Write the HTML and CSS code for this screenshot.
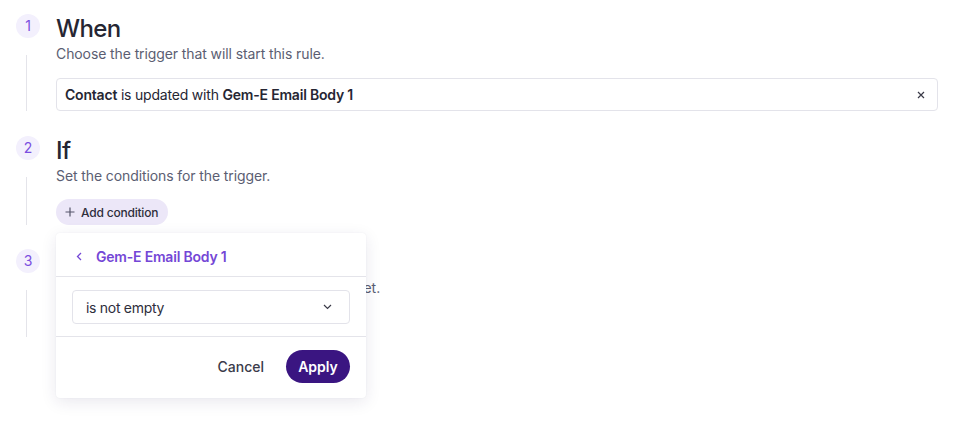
FILE: index.html
```html
<!DOCTYPE html>
<html>
<head>
<meta charset="utf-8">
<link rel="stylesheet" href="styles.css">
</head>
<body>
<div class="page">
  <div class="step">
    <div class="rail"><div class="num">1</div><div class="line"></div></div>
    <div class="content">
      <h2 class="title">When</h2>
      <p class="sub">Choose the trigger that will start this rule.</p>
      <div class="field"><span><b>Contact</b> is updated with <b>Gem-E Email Body 1</b></span>
        <svg class="x" width="8" height="8" viewBox="0 0 8 8"><path d="M1 1L7 7M7 1L1 7" stroke="#3a3a48" stroke-width="1.2" fill="none"/></svg>
      </div>
    </div>
  </div>
  <div class="step">
    <div class="rail"><div class="num">2</div><div class="line"></div></div>
    <div class="content">
      <h2 class="title">If</h2>
      <p class="sub">Set the conditions for the trigger.</p>
      <button class="add"><svg width="10" height="10" viewBox="0 0 10 10"><path d="M5 0.5V9.5M0.5 5H9.5" stroke="#55556a" stroke-width="1.2"/></svg>Add condition</button>
    </div>
  </div>
  <div class="step step-last">
    <div class="rail"><div class="num">3</div><div class="line"></div></div>
    <div class="content">
      <h2 class="title">Then</h2>
      <p class="sub sub-wide">Set the actions that run when conditions are met.</p>
      <div class="spacer"></div>
    </div>
  </div>

  <div class="popover">
    <div class="pop-head">
      <svg width="6" height="9" viewBox="0 0 6 9"><path d="M5 1L1.5 4.5L5 8" stroke="#7447d6" stroke-width="1.3" fill="none"/></svg>
      <span>Gem-E Email Body 1</span>
    </div>
    <div class="pop-body">
      <div class="select"><span>is not empty</span>
        <svg width="9" height="6" viewBox="0 0 9 6"><path d="M1 1L4.5 4.5L8 1" stroke="#3a3a48" stroke-width="1.2" fill="none"/></svg>
      </div>
    </div>
    <div class="pop-foot">
      <button class="cancel">Cancel</button>
      <button class="apply">Apply</button>
    </div>
  </div>
</div>
</body>
</html>
```
FILE: styles.css
```css
* { box-sizing: border-box; }
html, body { margin: 0; background: #fff; }
body { font-family: Inter, "Noto Sans", sans-serif; color: #262633; }
.page { position: relative; padding: 14px 26px 0 16px; width: 964px; height: 436px; }
.step { display: flex; margin-bottom: 25px; }
.step-last { margin-top: -1px; }
.rail { width: 40px; flex: none; display: flex; flex-direction: column; }
.num { width: 24px; height: 24px; border-radius: 50%; background: #f3f0fd; color: #7b4ee0; font-size: 14px; line-height: 24px; text-align: center; }
.line { width: 1px; background: #e4e4ea; margin: 17px 0 0 10px; flex: 1; }
.content { flex: 1; }
.title { margin: 0; font-size: 24px; line-height: 30px; font-weight: 500; letter-spacing: -0.6px; color: #262633; }
.sub { margin: 0; font-size: 14px; line-height: 20px; letter-spacing: -0.1px; color: #5b5e72; }
.sub-wide { letter-spacing: 0; margin-top: -1px; }
.field { margin-top: 14px; height: 33px; border: 1px solid #e3e3ea; border-radius: 4px; display: flex; align-items: center; justify-content: space-between; padding: 0 12px 0 8px; font-size: 14px; letter-spacing: -0.2px; color: #262633; }
.field b { font-weight: 600; }
.add { margin-top: 13px; height: 26px; border: 0; border-radius: 13px; background: #ece7f8; padding: 0 10px 0 9px; font-family: inherit; font-size: 12px; font-weight: 500; letter-spacing: -0.2px; color: #2e2e3c; display: inline-flex; align-items: center; gap: 6px; }
.spacer { height: 39px; }
.popover { position: absolute; left: 56px; top: 233px; width: 310px; height: 165px; background: #fff; border-radius: 4px; box-shadow: 0 4px 16px rgba(40, 30, 90, 0.10), 0 0 2px rgba(40,30,90,0.06); display: flex; flex-direction: column; }
.pop-head { height: 44px; padding-top: 4px; border-bottom: 1px solid #e4e4ea; display: flex; align-items: center; padding-left: 20px; gap: 14px; color: #7447d6; font-size: 14px; font-weight: 600; letter-spacing: -0.2px; }
.pop-body { padding: 13px 16px 12px; border-bottom: 1px solid #e4e4ea; }
.select { height: 34px; border: 1px solid #e3e3ea; border-radius: 4px; display: flex; align-items: center; justify-content: space-between; padding: 0 17px 0 13px; font-size: 14px; letter-spacing: -0.3px; color: #2e2e3c; }
.pop-foot { flex: 1; display: flex; align-items: center; justify-content: flex-end; padding: 0 16px 3px; gap: 22px; }
.cancel { border: 0; background: none; padding: 0; font-family: inherit; font-size: 14px; font-weight: 500; color: #3b3b4a; }
.apply { height: 33px; width: 64px; border: 0; border-radius: 17px; background: #3a1581; color: #fff; font-family: inherit; font-size: 14px; font-weight: 600; }
```
